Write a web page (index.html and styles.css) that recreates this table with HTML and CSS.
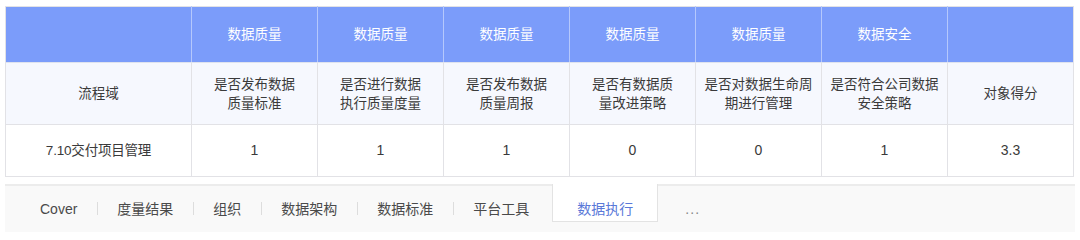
FILE: index.html
```html
<!DOCTYPE html>
<html lang="zh">
<head>
<meta charset="utf-8">
<link rel="stylesheet" href="styles.css">
</head>
<body>
<div class="page">
  <table class="grid">
    <colgroup>
      <col class="c-first">
      <col><col><col><col><col><col><col>
    </colgroup>
    <thead>
      <tr class="row-head">
        <th></th>
        <th>数据质量</th>
        <th>数据质量</th>
        <th>数据质量</th>
        <th>数据质量</th>
        <th>数据质量</th>
        <th>数据安全</th>
        <th></th>
      </tr>
    </thead>
    <tbody>
      <tr class="row-sub">
        <td>流程域</td>
        <td>是否发布数据<br>质量标准</td>
        <td>是否进行数据<br>执行质量度量</td>
        <td>是否发布数据<br>质量周报</td>
        <td>是否有数据质<br>量改进策略</td>
        <td>是否对数据生命周<br>期进行管理</td>
        <td>是否符合公司数据<br>安全策略</td>
        <td>对象得分</td>
      </tr>
      <tr class="row-data">
        <td class="name">7.10交付项目管理</td>
        <td>1</td>
        <td>1</td>
        <td>1</td>
        <td>0</td>
        <td>0</td>
        <td>1</td>
        <td>3.3</td>
      </tr>
    </tbody>
  </table>

  <div class="tabs">
    <span class="tab">Cover</span>
    <span class="tab sep">度量结果</span>
    <span class="tab sep">组织</span>
    <span class="tab sep">数据架构</span>
    <span class="tab sep">数据标准</span>
    <span class="tab sep">平台工具</span>
    <span class="tab active">数据执行</span>
    <span class="tab more">...</span>
  </div>
</div>
</body>
</html>
```

FILE: styles.css
```css
* { box-sizing: border-box; }

html, body {
  margin: 0;
  padding: 0;
  background: #ffffff;
}

body {
  font-family: "Liberation Sans", "Noto Sans CJK SC", sans-serif;
  font-size: 13.5px;
  color: #3a3a3a;
}

.page {
  padding: 6px 0 0 5px;
  width: 1080px;
}

.grid {
  width: 1069px;
  border-collapse: collapse;
  table-layout: fixed;
  border: 1px solid #e2e2e6;
}

.grid col.c-first { width: 186px; }

.grid th,
.grid td {
  text-align: center;
  vertical-align: middle;
  padding: 0;
  line-height: 19px;
  font-weight: normal;
}

.row-data td { font-size: 14px; }
.row-data td.name { font-size: 13.5px; letter-spacing: -0.2px; }

.row-head th {
  height: 56px;
  background: #7b9cfa;
  color: #ffffff;
  border-left: 1px solid #b5c8fc;
  border-bottom: 1px solid #dfe3ee;
}

.row-head th:first-child { border-left: none; }

.row-sub td {
  height: 62px;
  background: #f6f8fe;
  border-left: 1px solid #e2e2e6;
  border-bottom: 1px solid #e2e2e6;
}

.row-data td {
  height: 52px;
  background: #ffffff;
  border-left: 1px solid #e2e2e6;
}

.row-sub td:first-child,
.row-data td:first-child { border-left: none; }

.tabs {
  margin-top: 7px;
  width: 1070px;
  height: 48px;
  background: #f9f9f9;
  border-top: 2px solid #ececec;
  display: flex;
  align-items: flex-start;
  padding-left: 15px;
  font-size: 14px;
  color: #4a4a4a;
}

.tab {
  position: relative;
  height: 36px;
  padding: 13px 20px 0;
  line-height: 20px;
}

.tab.sep::before {
  content: "";
  position: absolute;
  left: 0;
  top: 16px;
  width: 1px;
  height: 13px;
  background: #dddddd;
}

.tab.active {
  margin-left: 3px;
  padding: 15px 24px 0;
  background: #ffffff;
  border: 1px solid #e3e3e3;
  border-top: none;
  color: #5a78d8;
  margin-top: -2px;
  height: 38px;
}

.tab.more {
  padding-left: 27px;
  padding-right: 27px;
  color: #888888;
  letter-spacing: 1px;
}
```
